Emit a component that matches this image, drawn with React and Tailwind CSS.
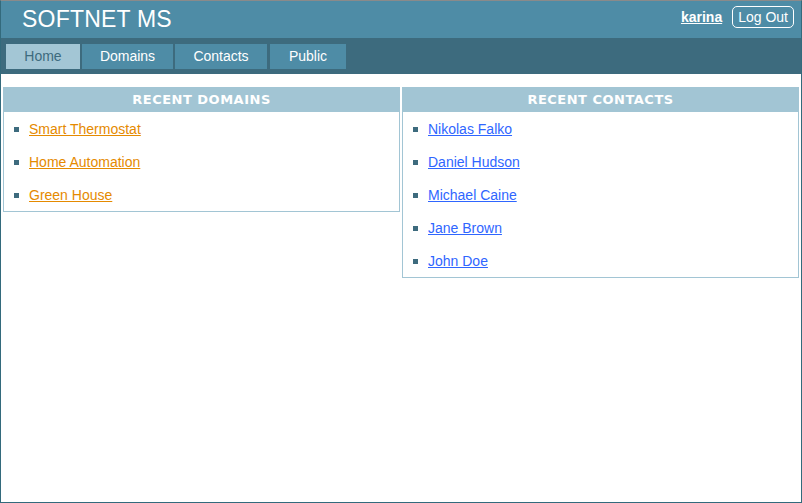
const domains = ['Smart Thermostat', 'Home Automation', 'Green House'];
const contacts = ['Nikolas Falko', 'Daniel Hudson', 'Michael Caine', 'Jane Brown', 'John Doe'];
const tabs = [
  { label: 'Home', w: 'w-[74px]' },
  { label: 'Domains', w: 'w-[91px]' },
  { label: 'Contacts', w: 'w-[92px]' },
  { label: 'Public', w: 'w-[76px]' },
];

function Panel({ title, items, linkClass }) {
  return (
    <div className="border border-[#a2c5d4] bg-white">
      <div className="h-[24px] bg-[#a2c5d4] text-center font-['DejaVu_Sans',sans-serif] text-[13px] font-bold leading-[24px] tracking-[0.5px] text-white">
        {title}
      </div>
      <ul>
        {items.map(item => (
          <li key={item} className="flex h-[33px] items-center pl-[10px] pt-[2px]">
            <span className="mr-[10px] inline-block h-[5px] w-[5px] bg-[#3d6b7e]" />
            <a href="#" className={`text-[14px] underline ${linkClass}`}>{item}</a>
          </li>
        ))}
      </ul>
    </div>
  );
}

export default function App() {
  return (
    <div className="flex h-[503px] w-[802px] flex-col border border-[#336a7c] border-t-[#8a8a8a] bg-white font-['Liberation_Sans',Arial,sans-serif]">
      {/* header */}
      <div className="flex h-[37px] items-center justify-between bg-[#4e8ca6] pl-[21px] pr-[7px]">
        <div className="text-[23px] leading-none tracking-[0.2px] text-white">SOFTNET MS</div>
        <div className="flex items-center gap-[10px] pb-[5px]">
          <a href="#" className="text-[14px] font-bold text-white underline">karina</a>
          <button className="h-[22px] rounded-[5px] border border-white px-[5px] text-[14px] leading-none text-white">
            Log Out
          </button>
        </div>
      </div>

      {/* nav */}
      <div className="flex h-[36px] bg-[#3d6b7e] pl-[5px] pt-[6px]">
        {tabs.map((t, i) => (
          <a
            key={t.label}
            href="#"
            className={`h-[25px] ${t.w} text-center text-[14px] leading-[25px] ${
              i === 0 ? 'bg-[#a3c6d5] text-[#3d6b7e]' : 'bg-[#4e8ca6] text-white'
            } ${i === 2 ? 'mr-[3px]' : 'mr-[2px]'}`}
          >
            {t.label}
          </a>
        ))}
      </div>

      {/* content */}
      <div className="grid grid-cols-2 items-start gap-[2px] px-[2px] pt-[13px]">
        <Panel title="RECENT DOMAINS" items={domains} linkClass="text-[#e58a00]" />
        <Panel title="RECENT CONTACTS" items={contacts} linkClass="text-[#2f66ff]" />
      </div>
    </div>
  );
}
